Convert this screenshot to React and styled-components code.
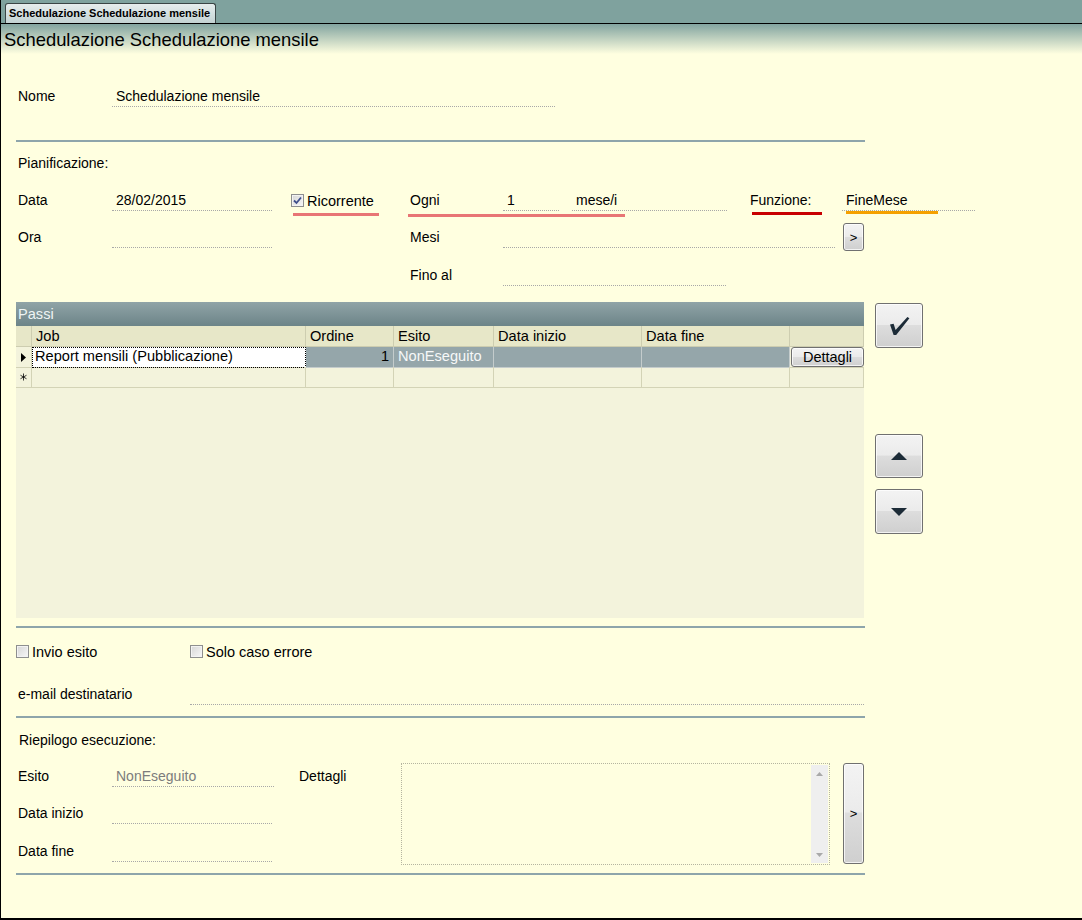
import React from 'react';
import styled, { createGlobalStyle } from 'styled-components';

const Global = createGlobalStyle`
  html, body { margin: 0; padding: 0; background: #ffffe0; }
  body { font-family: "Liberation Sans", Arial, sans-serif; font-size: 14px; color: #000; }
  * { box-sizing: border-box; }
`;

const Window = styled.div`
  width: 1082px;
  height: 920px;
  border-left: 1px solid #000;
  border-bottom: 2px solid #000;
  background: #ffffe0;
  display: flex;
  flex-direction: column;
  overflow: hidden;
`;

const TabStrip = styled.div`
  height: 24px;
  flex: none;
  background: #7fa29e;
  border-bottom: 1px solid #000;
  display: flex;
  align-items: flex-end;
  padding-left: 4px;
`;

const Tab = styled.div`
  width: 211px;
  height: 20px;
  padding-left: 3px;
  border: 1px solid #3a4545;
  border-bottom: none;
  border-radius: 3px 3px 0 0;
  background: linear-gradient(#e6eded, #c3d3d3);
  font-weight: bold;
  font-size: 11px;
  line-height: 19px;
  white-space: nowrap;
`;

const Body = styled.div`
  flex: 1;
  background: linear-gradient(#82a4a0 0px, #ffffe0 30px) no-repeat;
  background-size: 100% 30px;
  background-color: #ffffe0;
`;

const Title = styled.div`
  height: 32px;
  line-height: 32px;
  padding-left: 3px;
  font-size: 18.4px;
  white-space: nowrap;
`;

const Form = styled.div`
  padding-left: 15px;
  display: flex;
  flex-direction: column;
`;

const Row = styled.div`
  display: flex;
  align-items: flex-start;
  height: 21px;
  margin-top: ${p => p.$mt || 0}px;
  position: relative;
`;

const Label = styled.div`
  width: ${p => (p.$w ? `${p.$w}px` : 'auto')};
  margin-left: ${p => p.$ml || 0}px;
  margin-top: ${p => p.$mtop || 0}px;
  padding-left: ${p => (p.$pl ?? 2)}px;
  height: 21px;
  line-height: 20px;
  white-space: nowrap;
  flex: none;
`;

const Field = styled.div`
  width: ${p => p.$w}px;
  margin-left: ${p => p.$ml || 0}px;
  height: 21px;
  line-height: 20px;
  padding: 0 4px;
  border-bottom: 1px dotted #a8a8a8;
  color: ${p => p.$muted ? '#7c7c7c' : '#000'};
  white-space: nowrap;
  flex: none;
`;

const Separator = styled.div`
  width: 849px;
  height: 2px;
  margin-top: ${p => p.$mt || 0}px;
  background: #8ea5ab;
  flex: none;
`;

const Underline = styled.div`
  position: absolute;
  left: ${p => p.$x}px;
  top: ${p => p.$y}px;
  width: ${p => p.$w}px;
  height: 3px;
  background: ${p => p.$c};
`;

const CheckItem = styled.div`
  display: flex;
  align-items: center;
  height: 21px;
  width: ${p => (p.$w ? `${p.$w}px` : 'auto')};
  margin-left: ${p => p.$ml || 0}px;
  flex: none;
  white-space: nowrap;
  font-size: 14.5px;
`;

const Box = styled.span`
  width: 13px;
  height: 13px;
  border: 1px solid #8e8f8f;
  background: linear-gradient(135deg, #d6d6d6, #f7f7f7);
  box-shadow: inset 0 0 0 1px #f3f3f3;
  display: flex;
  align-items: center;
  justify-content: center;
  margin-right: 3px;
  flex: none;
`;

const Btn = styled.button`
  width: ${p => p.$w}px;
  height: ${p => p.$h}px;
  margin: ${p => p.$m || '0'};
  padding: 0;
  border: 1px solid #707070;
  border-radius: 3px;
  background: linear-gradient(#f3f3f3 0%, #ebebeb 48%, #dddddd 50%, #cfcfcf 100%);
  box-shadow: inset 0 0 0 1px rgba(255, 255, 255, 0.75);
  display: flex;
  align-items: center;
  justify-content: center;
  font-family: "Liberation Sans", Arial, sans-serif;
  font-size: ${p => p.$fs || 14.5}px;
  color: #000;
  flex: none;
`;

const GridSection = styled.div`
  display: flex;
  margin-top: 16px;
  height: 316px;
`;

const Table = styled.div`
  width: 848px;
  height: 316px;
  background: #f3f3dc;
  display: flex;
  flex-direction: column;
  flex: none;
  font-size: 14.6px;
`;

const Caption = styled.div`
  height: 24px;
  line-height: 24px;
  padding-left: 2px;
  background: linear-gradient(#90a4a7, #6c8488);
  color: #eef4f4;
`;

const GridRow = styled.div`
  display: grid;
  grid-template-columns: 16px 274px 88px 100px 148px 148px 74px;
  height: ${p => p.$h}px;
  flex: none;
`;

const Cell = styled.div`
  border-right: 1px solid ${p => p.$line || '#d3d3b6'};
  border-bottom: 1px solid ${p => p.$line || '#d3d3b6'};
  background: ${p => p.$bg || 'transparent'};
  color: ${p => p.$fg || '#000'};
  padding: 0 4px;
  line-height: ${p => p.$lh || 20}px;
  text-align: ${p => p.$right ? 'right' : 'left'};
  white-space: nowrap;
  overflow: hidden;
  display: ${p => p.$center ? 'flex' : 'block'};
  align-items: center;
  justify-content: center;
`;

const FocusCell = styled.div`
  background: #fff;
  outline: 1px dotted #000;
  outline-offset: -1px;
  border-bottom: 1px solid #d3d3b6;
  padding: 0 3px;
  line-height: 19px;
  white-space: nowrap;
`;

const ButtonCell = styled.div`
  border-bottom: 1px solid #d3d3b6;
  padding-left: 1px;
`;

const SideCol = styled.div`
  display: flex;
  flex-direction: column;
  margin-left: 11px;
  width: 48px;
`;

const SummarySection = styled.div`
  display: flex;
  margin-top: 12px;
  height: 102px;
`;

const SummaryLeft = styled.div`
  width: 258px;
  padding-top: 3px;
  display: flex;
  flex-direction: column;
`;

const TextBox = styled.div`
  width: 429px;
  height: 102px;
  border: 1px dotted #b5b5a0;
  display: flex;
  justify-content: flex-end;
  padding: 1px 1px 1px 0;
`;

const ScrollTrack = styled.div`
  width: 17px;
  height: 100%;
  background: #efefef;
  display: flex;
  flex-direction: column;
  justify-content: space-between;
  align-items: center;
  padding: 7px 0 6px;
`;

const Check = ({ on }) => (
  <Box>
    {on && (
      <svg width="9" height="9" viewBox="0 0 9 9">
        <path d="M1 4.5 L3.5 7 L8 1.5" fill="none" stroke="#3f4f8c" strokeWidth="1.8" />
      </svg>
    )}
  </Box>
);

const RowArrow = () => (
  <svg width="5" height="9" viewBox="0 0 5 9">
    <path d="M0 0 L5 4.5 L0 9 Z" fill="#000" />
  </svg>
);

const Star = () => (
  <svg width="10" height="10" viewBox="0 0 10 10">
    <path d="M5 0 V10 M0.7 2.5 L9.3 7.5 M0.7 7.5 L9.3 2.5" stroke="#000" strokeWidth="1.1" fill="none" />
  </svg>
);

const Tick = () => (
  <svg width="22" height="20" viewBox="0 0 22 20">
    <path d="M2 8.5 L5.6 7.8 L7.6 14 L19.4 1 L21.4 2.3 L8.2 19 L5.6 19 Z" fill="#1c2b37" />
  </svg>
);

const Tri = ({ down }) => (
  <svg width="16" height="8" viewBox="0 0 16 8">
    <path d={down ? 'M0 0 H16 L8 8 Z' : 'M8 0 L16 8 H0 Z'} fill="#1c2b37" />
  </svg>
);

const SmallTri = ({ down }) => (
  <svg width="7" height="4" viewBox="0 0 7 4">
    <path d={down ? 'M0 0 H7 L3.5 4 Z' : 'M3.5 0 L7 4 H0 Z'} fill="#a9a9a9" />
  </svg>
);

export default function App() {
  return (
    <>
      <Global />
      <Window>
        <TabStrip>
          <Tab>Schedulazione Schedulazione mensile</Tab>
        </TabStrip>
        <Body>
          <Title>Schedulazione Schedulazione mensile</Title>
          <Form>
            <Row $mt={30}>
              <Label $w={96}>Nome</Label>
              <Field $w={443}>Schedulazione mensile</Field>
            </Row>
            <Separator $mt={33} />
            <Row $mt={11}>
              <Label>Pianificazione:</Label>
            </Row>
            <Row $mt={16}>
              <Label $w={96}>Data</Label>
              <Field $w={160}>28/02/2015</Field>
              <CheckItem $w={117} $ml={19}>
                <Check on />
                Ricorrente
              </CheckItem>
              <Label $w={95}>Ogni</Label>
              <Field $w={56}>1</Field>
              <Field $w={155} $ml={13}>mese/i</Field>
              <Label $w={92} $ml={23} $pl={0}>Funzione:</Label>
              <Field $w={133}>FineMese</Field>
              <Underline $x={277} $y={23} $w={86} $c="#e87575" />
              <Underline $x={392} $y={24} $w={217} $c="#e87575" />
              <Underline $x={736} $y={22} $w={70} $c="#c80000" />
              <Underline $x={830} $y={21} $w={92} $c="#f5a000" />
            </Row>
            <Row $mt={16}>
              <Label $w={96}>Ora</Label>
              <Field $w={160} />
              <Label $w={95} $ml={136}>Mesi</Label>
              <Field $w={332} />
              <Btn $w={21} $h={28} $m="-4px 0 0 8px" $fs={13}>&gt;</Btn>
            </Row>
            <Row $mt={17}>
              <Label $w={95} $ml={392}>Fino al</Label>
              <Field $w={223} />
            </Row>

            <GridSection>
              <Table>
                <Caption>Passi</Caption>
                <GridRow $h={21}>
                  <Cell $bg="#e7e7c8" $line="#cdcdb0" />
                  <Cell $bg="#e7e7c8" $line="#cdcdb0">Job</Cell>
                  <Cell $bg="#e7e7c8" $line="#cdcdb0">Ordine</Cell>
                  <Cell $bg="#e7e7c8" $line="#cdcdb0">Esito</Cell>
                  <Cell $bg="#e7e7c8" $line="#cdcdb0">Data inizio</Cell>
                  <Cell $bg="#e7e7c8" $line="#cdcdb0">Data fine</Cell>
                  <Cell $bg="#e7e7c8" $line="#cdcdb0" />
                </GridRow>
                <GridRow $h={20}>
                  <Cell $center $lh={19}><RowArrow /></Cell>
                  <FocusCell>Report mensili (Pubblicazione)</FocusCell>
                  <Cell $bg="#95a6aa" $line="#c4cccc" $right $lh={19}>1</Cell>
                  <Cell $bg="#95a6aa" $line="#c4cccc" $fg="#f6f8f8" $lh={19}>NonEseguito</Cell>
                  <Cell $bg="#95a6aa" $line="#c4cccc" />
                  <Cell $bg="#95a6aa" $line="#c4cccc" />
                  <ButtonCell>
                    <Btn $w={73} $h={20}>Dettagli</Btn>
                  </ButtonCell>
                </GridRow>
                <GridRow $h={21}>
                  <Cell $center><Star /></Cell>
                  <Cell />
                  <Cell />
                  <Cell />
                  <Cell />
                  <Cell />
                  <Cell />
                </GridRow>
              </Table>
              <SideCol>
                <Btn $w={48} $h={45} $m="1px 0 0 0"><Tick /></Btn>
                <Btn $w={48} $h={44} $m="86px 0 0 0"><Tri /></Btn>
                <Btn $w={48} $h={45} $m="11px 0 0 0"><Tri down /></Btn>
              </SideCol>
            </GridSection>

            <Separator $mt={8} />
            <Row $mt={13}>
              <CheckItem $w={174}>
                <Check />
                Invio esito
              </CheckItem>
              <CheckItem>
                <Check />
                Solo caso errore
              </CheckItem>
            </Row>
            <Row $mt={22}>
              <Label $w={174}>e-mail destinatario</Label>
              <Field $w={674} />
            </Row>
            <Separator $mt={11} />
            <Row $mt={12}>
              <Label $pl={3}>Riepilogo esecuzione:</Label>
            </Row>
            <SummarySection>
              <SummaryLeft>
                <Row>
                  <Label $w={96}>Esito</Label>
                  <Field $w={162} $muted>NonEseguito</Field>
                </Row>
                <Row $mt={16}>
                  <Label $w={96}>Data inizio</Label>
                  <Field $w={160} />
                </Row>
                <Row $mt={17}>
                  <Label $w={96}>Data fine</Label>
                  <Field $w={160} />
                </Row>
              </SummaryLeft>
              <Label $w={102} $ml={25} $pl={0} $mtop={3}>Dettagli</Label>
              <TextBox>
                <ScrollTrack>
                  <SmallTri />
                  <SmallTri down />
                </ScrollTrack>
              </TextBox>
              <Btn $w={21} $h={101} $m="0 0 0 13px" $fs={13}>&gt;</Btn>
            </SummarySection>
            <Separator $mt={8} />
          </Form>
        </Body>
      </Window>
    </>
  );
}
